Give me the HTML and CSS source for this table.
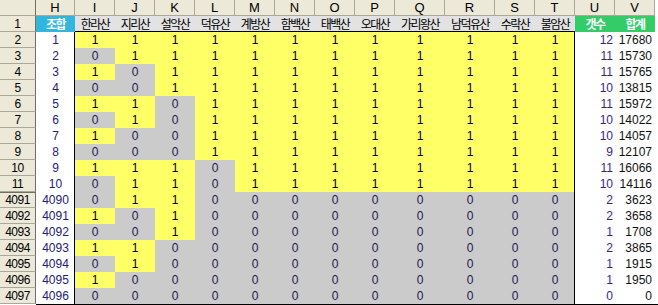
FILE: index.html
```html
<!DOCTYPE html>
<html lang="ko">
<head>
<meta charset="utf-8">
<link rel="stylesheet" href="styles.css">
</head>
<body>
<div class="sheet">
  <div class="row colhead">
    <span class="corner"></span><span>H</span><span>I</span><span>J</span><span>K</span><span>L</span><span>M</span><span>N</span><span>O</span><span>P</span><span>Q</span><span>R</span><span>S</span><span>T</span><span>U</span><span>V</span>
  </div>
  <div class="row titles">
    <span class="rh">1</span><span class="t-key">조합</span><span class="t">한라산</span><span class="t">지리산</span><span class="t">설악산</span><span class="t">덕유산</span><span class="t">계방산</span><span class="t">함백산</span><span class="t">태백산</span><span class="t">오대산</span><span class="t">가리왕산</span><span class="t">남덕유산</span><span class="t">수락산</span><span class="t">불암산</span><span class="t-sum">갯수</span><span class="t-sum">합계</span>
  </div>
  <div class="row data">
    <span class="rh">2</span><span class="k">1</span><span class="y">1</span><span class="y">1</span><span class="y">1</span><span class="y">1</span><span class="y">1</span><span class="y">1</span><span class="y">1</span><span class="y">1</span><span class="y">1</span><span class="y">1</span><span class="y">1</span><span class="y">1</span><span class="u">12</span><span class="v">17680</span>
  </div>
  <div class="row data">
    <span class="rh">3</span><span class="k">2</span><span class="g">0</span><span class="y">1</span><span class="y">1</span><span class="y">1</span><span class="y">1</span><span class="y">1</span><span class="y">1</span><span class="y">1</span><span class="y">1</span><span class="y">1</span><span class="y">1</span><span class="y">1</span><span class="u">11</span><span class="v">15730</span>
  </div>
  <div class="row data">
    <span class="rh">4</span><span class="k">3</span><span class="y">1</span><span class="g">0</span><span class="y">1</span><span class="y">1</span><span class="y">1</span><span class="y">1</span><span class="y">1</span><span class="y">1</span><span class="y">1</span><span class="y">1</span><span class="y">1</span><span class="y">1</span><span class="u">11</span><span class="v">15765</span>
  </div>
  <div class="row data">
    <span class="rh">5</span><span class="k">4</span><span class="g">0</span><span class="g">0</span><span class="y">1</span><span class="y">1</span><span class="y">1</span><span class="y">1</span><span class="y">1</span><span class="y">1</span><span class="y">1</span><span class="y">1</span><span class="y">1</span><span class="y">1</span><span class="u">10</span><span class="v">13815</span>
  </div>
  <div class="row data">
    <span class="rh">6</span><span class="k">5</span><span class="y">1</span><span class="y">1</span><span class="g">0</span><span class="y">1</span><span class="y">1</span><span class="y">1</span><span class="y">1</span><span class="y">1</span><span class="y">1</span><span class="y">1</span><span class="y">1</span><span class="y">1</span><span class="u">11</span><span class="v">15972</span>
  </div>
  <div class="row data">
    <span class="rh">7</span><span class="k">6</span><span class="g">0</span><span class="y">1</span><span class="g">0</span><span class="y">1</span><span class="y">1</span><span class="y">1</span><span class="y">1</span><span class="y">1</span><span class="y">1</span><span class="y">1</span><span class="y">1</span><span class="y">1</span><span class="u">10</span><span class="v">14022</span>
  </div>
  <div class="row data">
    <span class="rh">8</span><span class="k">7</span><span class="y">1</span><span class="g">0</span><span class="g">0</span><span class="y">1</span><span class="y">1</span><span class="y">1</span><span class="y">1</span><span class="y">1</span><span class="y">1</span><span class="y">1</span><span class="y">1</span><span class="y">1</span><span class="u">10</span><span class="v">14057</span>
  </div>
  <div class="row data">
    <span class="rh">9</span><span class="k">8</span><span class="g">0</span><span class="g">0</span><span class="g">0</span><span class="y">1</span><span class="y">1</span><span class="y">1</span><span class="y">1</span><span class="y">1</span><span class="y">1</span><span class="y">1</span><span class="y">1</span><span class="y">1</span><span class="u">9</span><span class="v">12107</span>
  </div>
  <div class="row data">
    <span class="rh">10</span><span class="k">9</span><span class="y">1</span><span class="y">1</span><span class="y">1</span><span class="g">0</span><span class="y">1</span><span class="y">1</span><span class="y">1</span><span class="y">1</span><span class="y">1</span><span class="y">1</span><span class="y">1</span><span class="y">1</span><span class="u">11</span><span class="v">16066</span>
  </div>
  <div class="row data">
    <span class="rh">11</span><span class="k">10</span><span class="g">0</span><span class="y">1</span><span class="y">1</span><span class="g">0</span><span class="y">1</span><span class="y">1</span><span class="y">1</span><span class="y">1</span><span class="y">1</span><span class="y">1</span><span class="y">1</span><span class="y">1</span><span class="u">10</span><span class="v">14116</span>
  </div>
  <div class="row data">
    <span class="rh brk">4091</span><span class="k">4090</span><span class="g">0</span><span class="y">1</span><span class="y">1</span><span class="g">0</span><span class="g">0</span><span class="g">0</span><span class="g">0</span><span class="g">0</span><span class="g">0</span><span class="g">0</span><span class="g">0</span><span class="g">0</span><span class="u">2</span><span class="v">3623</span>
  </div>
  <div class="row data">
    <span class="rh">4092</span><span class="k">4091</span><span class="y">1</span><span class="g">0</span><span class="y">1</span><span class="g">0</span><span class="g">0</span><span class="g">0</span><span class="g">0</span><span class="g">0</span><span class="g">0</span><span class="g">0</span><span class="g">0</span><span class="g">0</span><span class="u">2</span><span class="v">3658</span>
  </div>
  <div class="row data">
    <span class="rh">4093</span><span class="k">4092</span><span class="g">0</span><span class="g">0</span><span class="y">1</span><span class="g">0</span><span class="g">0</span><span class="g">0</span><span class="g">0</span><span class="g">0</span><span class="g">0</span><span class="g">0</span><span class="g">0</span><span class="g">0</span><span class="u">1</span><span class="v">1708</span>
  </div>
  <div class="row data">
    <span class="rh">4094</span><span class="k">4093</span><span class="y">1</span><span class="y">1</span><span class="g">0</span><span class="g">0</span><span class="g">0</span><span class="g">0</span><span class="g">0</span><span class="g">0</span><span class="g">0</span><span class="g">0</span><span class="g">0</span><span class="g">0</span><span class="u">2</span><span class="v">3865</span>
  </div>
  <div class="row data">
    <span class="rh">4095</span><span class="k">4094</span><span class="g">0</span><span class="y">1</span><span class="g">0</span><span class="g">0</span><span class="g">0</span><span class="g">0</span><span class="g">0</span><span class="g">0</span><span class="g">0</span><span class="g">0</span><span class="g">0</span><span class="g">0</span><span class="u">1</span><span class="v">1915</span>
  </div>
  <div class="row data">
    <span class="rh">4096</span><span class="k">4095</span><span class="y">1</span><span class="g">0</span><span class="g">0</span><span class="g">0</span><span class="g">0</span><span class="g">0</span><span class="g">0</span><span class="g">0</span><span class="g">0</span><span class="g">0</span><span class="g">0</span><span class="g">0</span><span class="u">1</span><span class="v">1950</span>
  </div>
  <div class="row data">
    <span class="rh">4097</span><span class="k">4096</span><span class="g">0</span><span class="g">0</span><span class="g">0</span><span class="g">0</span><span class="g">0</span><span class="g">0</span><span class="g">0</span><span class="g">0</span><span class="g">0</span><span class="g">0</span><span class="g">0</span><span class="g">0</span><span class="u">0</span><span class="v">0</span>
  </div>
  <div class="edge"></div>
</div>
</body>
</html>
```

FILE: styles.css
```css
html, body {
  margin: 0;
  padding: 0;
  background: #ffffff;
}

body {
  width: 658px;
  height: 305px;
  overflow: hidden;
  font-family: "Liberation Sans", Arial, sans-serif;
  font-size: 12px;
  color: #000;
}

.sheet {
  display: flex;
  flex-direction: column;
  width: 658px;
}

.row {
  display: grid;
  grid-template-columns: 36px 39px repeat(8, 40px) 50px 50px repeat(4, 40px) 1fr;
  height: 16px;
}

.row > span {
  display: flex;
  align-items: center;
  justify-content: center;
  box-sizing: border-box;
  height: 16px;
  line-height: 16px;
  white-space: nowrap;
  overflow: hidden;
}

/* column header strip */
.colhead > span {
  background: #ECE9D8;
  border-right: 1px solid #ACA899;
  border-bottom: 1px solid #ACA899;
  font-size: 13px;
  color: #000;
}
.colhead > span:first-child {
  border-right-color: #716F64;
}

/* row headers */
.rh {
  background: #ECE9D8;
  border-right: 1px solid #716F64;
  border-bottom: 1px solid #ACA899;
  font-size: 12px;
  letter-spacing: -0.5px;
  color: #000;
}
.rh.brk {
  border-top: 1px solid #716F64;
}

/* title row */
.titles > span {
  font-family: "Noto Sans CJK KR", "Liberation Sans", sans-serif;
  font-size: 12px;
  letter-spacing: -1.5px;
}
.titles > .rh {
  font-family: "Liberation Sans", Arial, sans-serif;
  letter-spacing: 0;
}
.t-key {
  background: #33B6DE;
  color: #ffffff;
  font-weight: bold;
}
.t {
  background: #E2E2E2;
  color: #000;
  box-shadow: inset 0 -1px 0 #000;
}
.t-sum {
  background: #33CC66;
  color: #ffffff;
  font-weight: bold;
}

/* data cells */
.k {
  background: #ffffff;
  color: #24207A;
}
.data > .k {
  box-shadow: inset -1px 0 0 #000;
}
.y {
  background: #FFFF66;
}
.g {
  background: #CBCBCB;
  color: #1E1850;
}
.data > span:nth-child(14) {
  box-shadow: inset -1px 0 0 #000;
}
.u {
  justify-content: flex-end !important;
  padding-right: 2px;
  color: #3A1F80;
}
.v {
  justify-content: flex-end !important;
  padding-right: 3px;
  color: #111;
}

.edge {
  height: 1px;
  margin-left: 36px;
  background: #000;
}
```
